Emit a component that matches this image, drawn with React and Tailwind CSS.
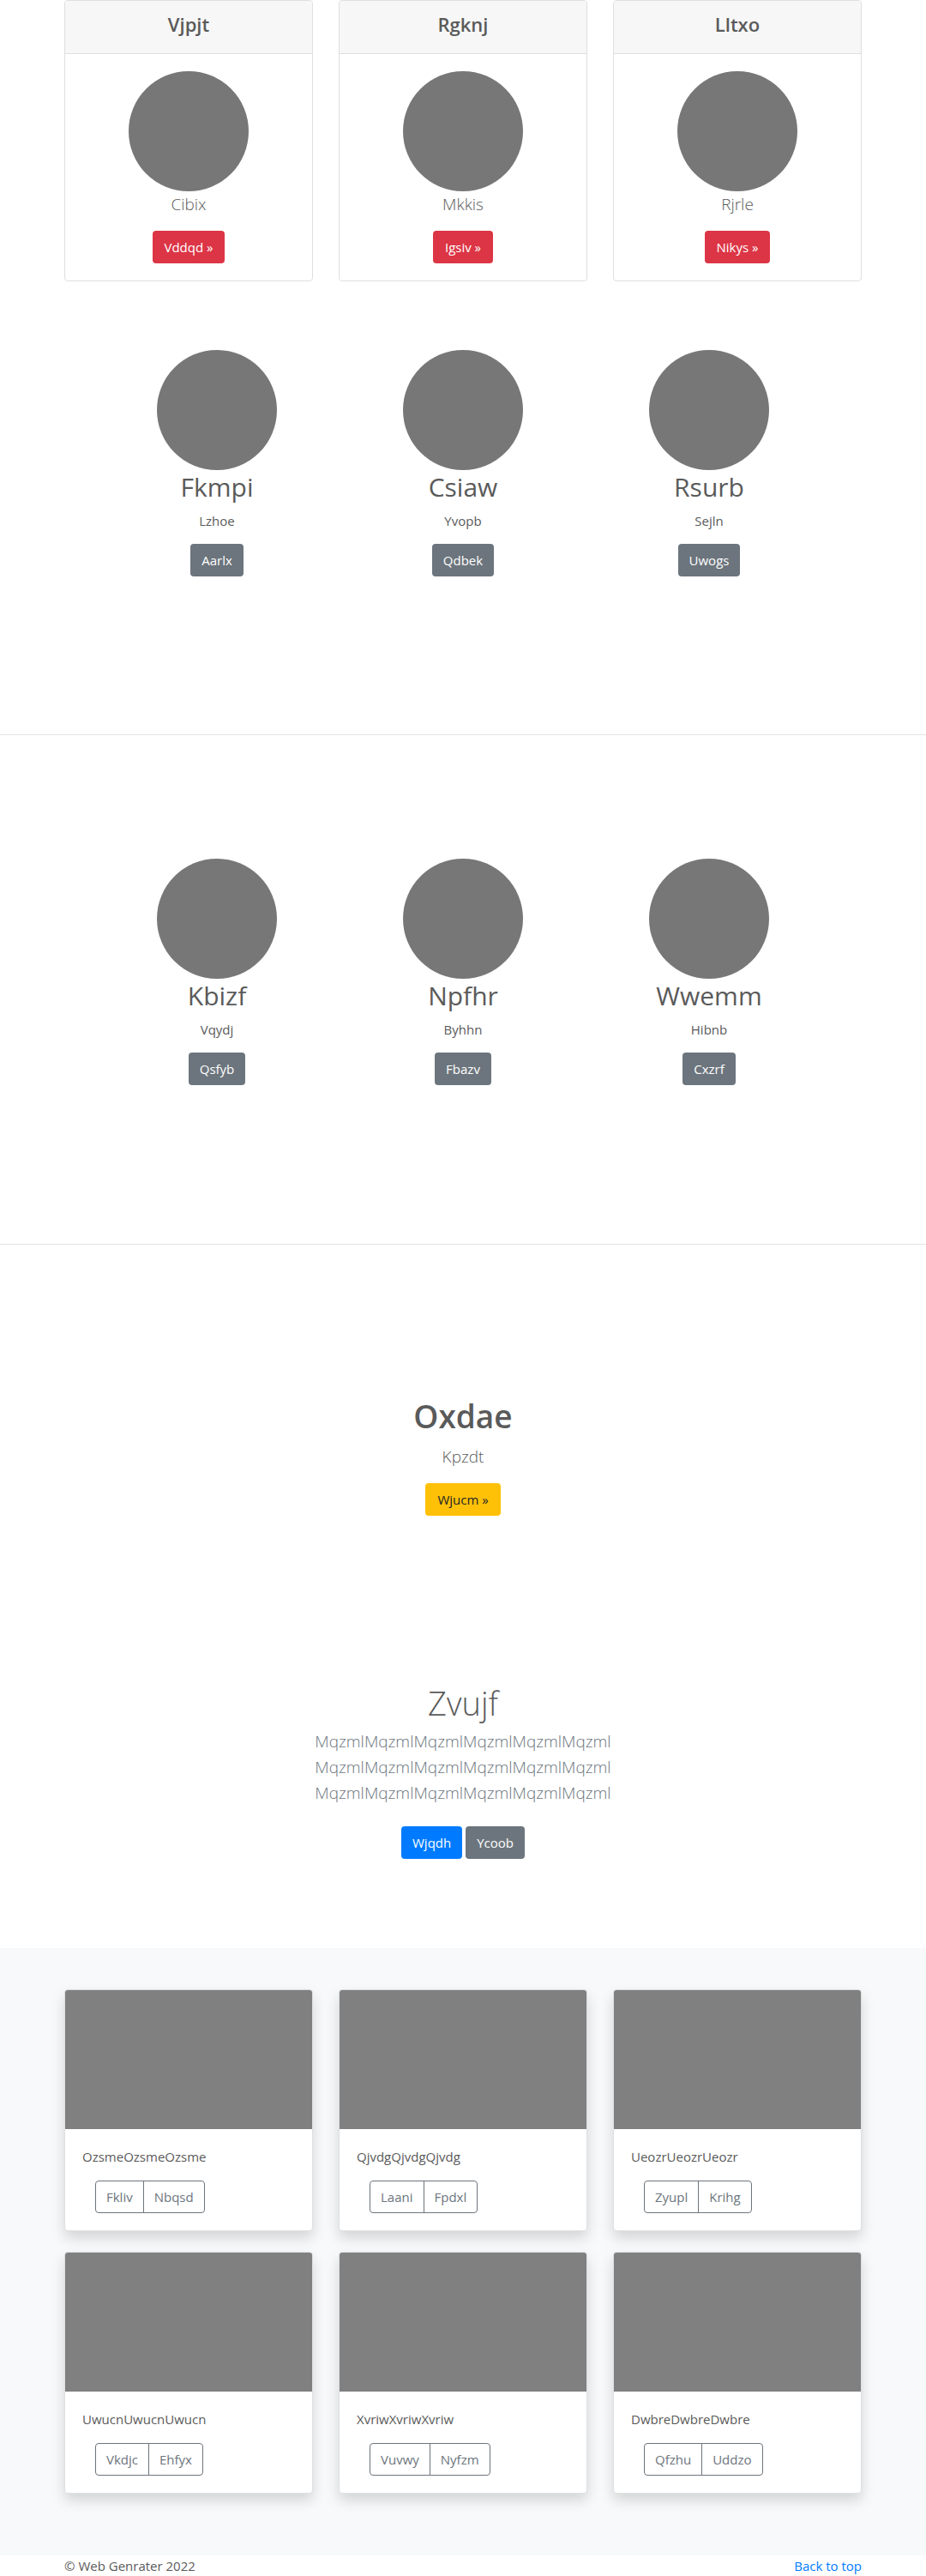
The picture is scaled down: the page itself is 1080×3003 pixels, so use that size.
const font = "font-['Segoe_UI','Open_Sans',sans-serif]";

const plans = [
  { title: "Vjpjt", text: "Cibix", action: "Vddqd »" },
  { title: "Rgknj", text: "Mkkis", action: "Igsiv »" },
  { title: "Lltxo", text: "Rjrle", action: "Nikys »" },
];

const featuresTop = [
  { title: "Fkmpi", text: "Lzhoe", action: "Aarlx" },
  { title: "Csiaw", text: "Yvopb", action: "Qdbek" },
  { title: "Rsurb", text: "Sejln", action: "Uwogs" },
];

const featuresBottom = [
  { title: "Kbizf", text: "Vqydj", action: "Qsfyb" },
  { title: "Npfhr", text: "Byhhn", action: "Fbazv" },
  { title: "Wwemm", text: "Hibnb", action: "Cxzrf" },
];

const album = [
  { text: "OzsmeOzsmeOzsme", a: "Fkliv", b: "Nbqsd" },
  { text: "QjvdgQjvdgQjvdg", a: "Laani", b: "Fpdxl" },
  { text: "UeozrUeozrUeozr", a: "Zyupl", b: "Krihg" },
  { text: "UwucnUwucnUwucn", a: "Vkdjc", b: "Ehfyx" },
  { text: "XvriwXvriwXvriw", a: "Vuvwy", b: "Nyfzm" },
  { text: "DwbreDwbreDwbre", a: "Qfzhu", b: "Uddzo" },
];

const tones = {
  red: "bg-[#dc3545] text-white px-[14px]",
  gray: "bg-[#6c757d] text-white px-[13px]",
  blue: "bg-[#007bff] text-white px-[13px]",
  yellow: "bg-[#ffc107] text-[#212529] px-[14px]",
};

function Button({ tone, children }) {
  return (
    <button type="button" className={`h-[38px] rounded text-[15px] leading-6 ${tones[tone]}`}>
      {children}
    </button>
  );
}

function Circle() {
  return <div className="size-[140px] rounded-full bg-[#777]" />;
}

function PlanCard({ title, text, action }) {
  return (
    <article className="flex flex-col rounded border border-[#dfdfdf] bg-white">
      <header className="rounded-t border-b border-[#dfdfdf] bg-[#f7f7f7] pt-[13px] pb-[19px] text-center">
        <h4 className="text-[22px] leading-[29px] font-semibold">{title}</h4>
      </header>
      <div className="flex flex-col items-center p-5">
        <Circle />
        <p className="mb-4 text-[19px] leading-[30px] font-light">{text}</p>
        <Button tone="red">{action}</Button>
      </div>
    </article>
  );
}

function Features({ items }) {
  return (
    <section className="mx-auto grid w-full max-w-[861px] grid-cols-3">
      {items.map((item) => (
        <div key={item.title} className="flex flex-col items-center">
          <Circle />
          <h2 className="mb-2 text-[30px] leading-[39px]">{item.title}</h2>
          <p className="mb-[15px] text-[15px] leading-6">{item.text}</p>
          <Button tone="gray">{item.action}</Button>
        </div>
      ))}
    </section>
  );
}

function AlbumCard({ text, a, b }) {
  return (
    <article className="rounded border border-[#dfe0e1] bg-white shadow-[0_8px_16px_rgba(0,0,0,0.15)]">
      <div className="h-[162px] rounded-t-[3px] bg-[#808080]" />
      <div className="p-5">
        <p className="mb-4 text-[15px] leading-6">{text}</p>
        <div className="ml-[15px] inline-flex h-[38px] divide-x divide-[#6c757d] rounded border border-[#6c757d] align-top text-[15px] text-[#6c757d]">
          <button type="button" className="px-3">{a}</button>
          <button type="button" className="px-3">{b}</button>
        </div>
      </div>
    </article>
  );
}

export default function App() {
  return (
    <div className={`bg-white text-[#5a5a5a] ${font}`}>
      <main>
        <section className="mx-auto grid max-w-[930px] grid-cols-3 gap-[30px]">
          {plans.map((plan) => (
            <PlanCard key={plan.title} {...plan} />
          ))}
        </section>

        <div className="pt-20">
          <Features items={featuresTop} />
        </div>
        <hr className="mt-[184px] mb-36 border-[#e4e4e4]" />
        <Features items={featuresBottom} />
        <hr className="mt-[185px] border-[#e4e4e4]" />

        <section className="flex flex-col items-center pt-44">
          <h1 className="mb-2 text-[37px] leading-[48px] font-semibold">Oxdae</h1>
          <p className="mb-4 text-[19px] leading-[30px] font-light">Kpzdt</p>
          <Button tone="yellow">Wjucm »</Button>
        </section>

        <section className="flex flex-col items-center pt-[194px] pb-[104px] text-center">
          <h1 className="mb-1.5 text-[38px] leading-[48px] font-light">Zvujf</h1>
          <p className="mb-6 text-[19px] leading-[30px] font-light text-[#6c757d]">
            MqzmlMqzmlMqzmlMqzmlMqzmlMqzml
            <br />
            MqzmlMqzmlMqzmlMqzmlMqzmlMqzml
            <br />
            MqzmlMqzmlMqzmlMqzmlMqzmlMqzml
          </p>
          <div className="flex gap-1">
            <Button tone="blue">Wjqdh</Button>
            <Button tone="gray">Ycoob</Button>
          </div>
        </section>

        <section className="bg-[#f8f9fa] pt-12 pb-[72px]">
          <div className="mx-auto grid max-w-[930px] grid-cols-3 gap-x-[30px] gap-y-6">
            {album.map((card) => (
              <AlbumCard key={card.text} {...card} />
            ))}
          </div>
        </section>
      </main>

      <footer className="mx-auto flex max-w-[930px] justify-between text-[15px] leading-6">
        <p>© Web Genrater 2022</p>
        <a href="#" className="text-[#007bff]">Back to top</a>
      </footer>
    </div>
  );
}
